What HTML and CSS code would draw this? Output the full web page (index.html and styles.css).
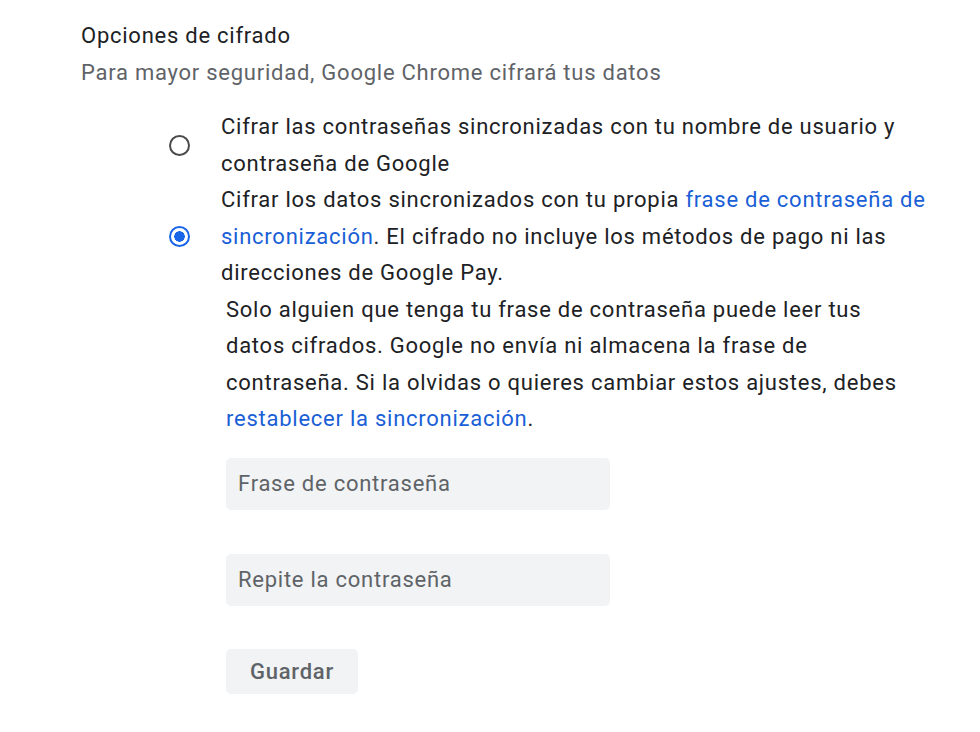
FILE: index.html
```html
<!DOCTYPE html>
<html lang="es">
<head>
    <meta charset="UTF-8">
    <title>Opciones de cifrado</title>
    <link rel="stylesheet" href="styles.css">
</head>
<body>
    <div class="settings-section">
        <div class="section-title">Opciones de cifrado</div>
        <div class="section-subtitle">Para mayor seguridad, Google Chrome cifrará tus datos</div>

        <div class="radio-group">
            <label class="radio-option">
                <span class="radio"></span>
                <span class="radio-label">Cifrar las contraseñas sincronizadas con tu nombre de usuario y contraseña de Google</span>
            </label>
            <label class="radio-option">
                <span class="radio checked"></span>
                <span class="radio-label">Cifrar los datos sincronizados con tu propia <a href="#">frase de contraseña de sincronización</a>. El cifrado no incluye los métodos de pago ni las direcciones de Google Pay.</span>
            </label>
        </div>

        <div class="passphrase-block">
            <p class="passphrase-info">Solo alguien que tenga tu frase de contraseña puede leer tus datos cifrados. Google no envía ni almacena la frase de contraseña. Si la olvidas o quieres cambiar estos ajustes, debes <a href="#">restablecer la sincronización</a>.</p>

            <input type="password" class="text-field" placeholder="Frase de contraseña">
            <input type="password" class="text-field" placeholder="Repite la contraseña">

            <button type="button" class="save-button">Guardar</button>
        </div>
    </div>
</body>
</html>
```

FILE: styles.css
```css
* {
    box-sizing: border-box;
    margin: 0;
    padding: 0;
}

body {
    background-color: #fff;
    color: #202124;
    font-family: Roboto, 'Liberation Sans', sans-serif;
    font-size: 22px;
    letter-spacing: 0.75px;
    line-height: 36.5px;
    padding: 18px 0 0 81px;
}

a {
    color: #1a5fd6;
    text-decoration: none;
}

.section-subtitle {
    color: #5f6368;
}

.radio-group {
    margin-top: 18px;
    padding-left: 88px;
}

.radio-option {
    display: flex;
    align-items: center;
    gap: 31px;
}

.radio {
    flex: none;
    width: 21px;
    height: 21px;
    border: 2.5px solid #4a4a4a;
    border-radius: 50%;
}

.radio.checked {
    border-color: #1a66e8;
    background: radial-gradient(circle, #1a66e8 0 5px, transparent 5.5px);
}

.radio-label {
    width: 712px;
}

.passphrase-block {
    padding-left: 145px;
    display: flex;
    flex-direction: column;
    align-items: flex-start;
}

.passphrase-info {
    width: 680px;
    margin-bottom: 20px;
}

.text-field {
    width: 384px;
    height: 52px;
    padding: 0 12px;
    margin-bottom: 44px;
    border: none;
    border-radius: 5px;
    background-color: #f1f3f4;
    font-family: inherit;
    font-size: 22px;
    letter-spacing: inherit;
    color: #202124;
}

.text-field::placeholder {
    color: #5f6368;
}

.text-field:focus {
    outline: none;
}

.save-button {
    width: 132px;
    height: 45px;
    margin-top: -1px;
    border: none;
    border-radius: 5px;
    background-color: #f1f3f4;
    color: #5f6368;
    font-family: inherit;
    font-size: 22px;
    font-weight: 500;
    letter-spacing: inherit;
    cursor: pointer;
}
```
